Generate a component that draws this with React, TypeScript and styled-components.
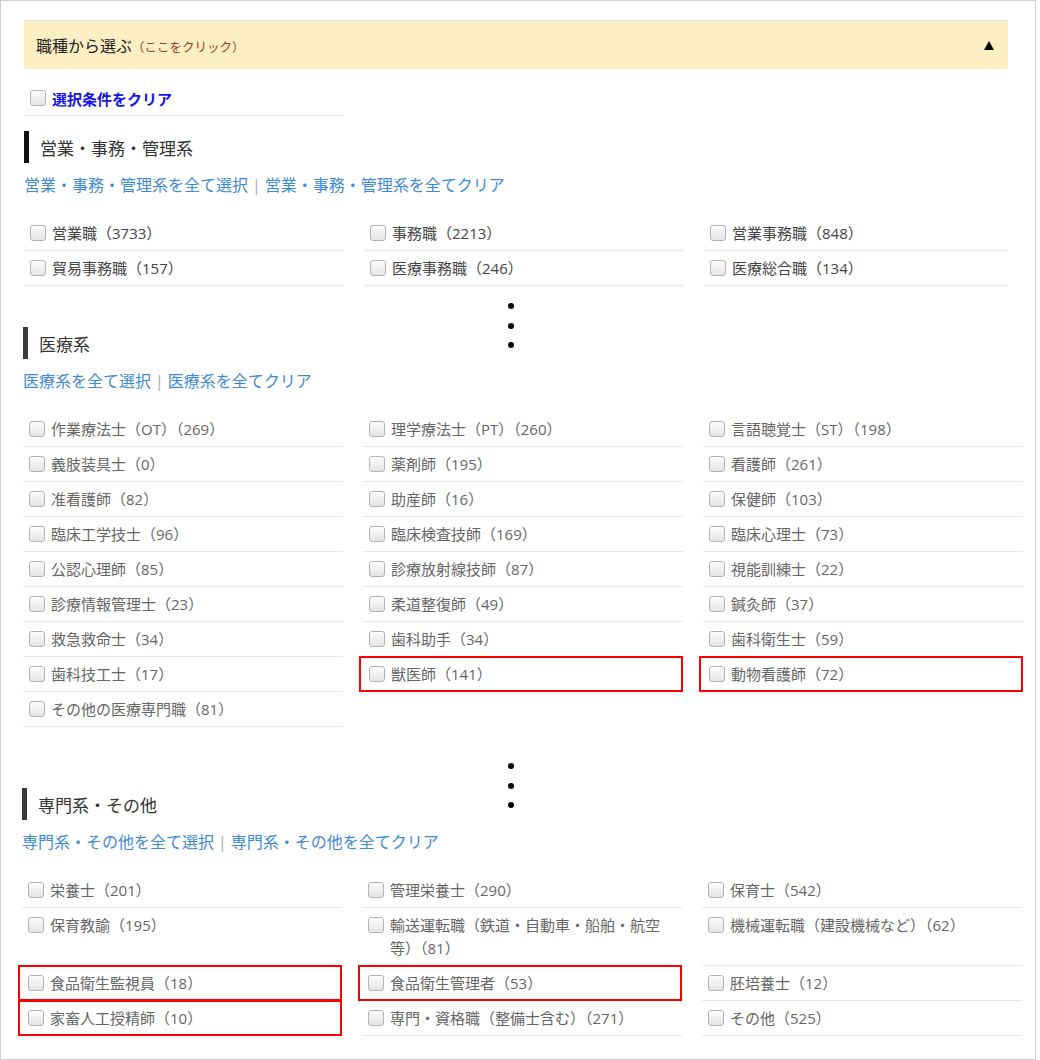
import React from "react";
import styled, { createGlobalStyle, css } from "styled-components";

const GlobalStyle = createGlobalStyle`
  html, body {
    margin: 0;
    padding: 0;
    background: #fff;
  }
  body {
    font-family: "Open Sans", "Noto Sans CJK JP", sans-serif;
  }
`;

type Job = { label: string; marked?: boolean };

type Group = {
  title: string;
  x: number;
  top: number;
  bar: string;
  text: string;
  cols: string;
  jobs: Job[];
};

const groups: Group[] = [
  {
    title: "営業・事務・管理系",
    x: 0,
    top: 15,
    bar: "#111",
    text: "#444",
    cols: "320px 320px 1fr",
    jobs: [
      { label: "営業職（3733）" },
      { label: "事務職（2213）" },
      { label: "営業事務職（848）" },
      { label: "貿易事務職（157）" },
      { label: "医療事務職（246）" },
      { label: "医療総合職（134）" },
    ],
  },
  {
    title: "医療系",
    x: -1,
    top: 41,
    bar: "#3a3a3a",
    text: "#666",
    cols: "320px 320px 320px",
    jobs: [
      { label: "作業療法士（OT）（269）" },
      { label: "理学療法士（PT）（260）" },
      { label: "言語聴覚士（ST）（198）" },
      { label: "義肢装具士（0）" },
      { label: "薬剤師（195）" },
      { label: "看護師（261）" },
      { label: "准看護師（82）" },
      { label: "助産師（16）" },
      { label: "保健師（103）" },
      { label: "臨床工学技士（96）" },
      { label: "臨床検査技師（169）" },
      { label: "臨床心理士（73）" },
      { label: "公認心理師（85）" },
      { label: "診療放射線技師（87）" },
      { label: "視能訓練士（22）" },
      { label: "診療情報管理士（23）" },
      { label: "柔道整復師（49）" },
      { label: "鍼灸師（37）" },
      { label: "救急救命士（34）" },
      { label: "歯科助手（34）" },
      { label: "歯科衛生士（59）" },
      { label: "歯科技工士（17）" },
      { label: "獣医師（141）", marked: true },
      { label: "動物看護師（72）", marked: true },
      { label: "その他の医療専門職（81）" },
    ],
  },
  {
    title: "専門系・その他",
    x: -2,
    top: 61,
    bar: "#3a3a3a",
    text: "#666",
    cols: "320px 320px 320px",
    jobs: [
      { label: "栄養士（201）" },
      { label: "管理栄養士（290）" },
      { label: "保育士（542）" },
      { label: "保育教諭（195）" },
      { label: "輸送運転職（鉄道・自動車・船舶・航空等）（81）" },
      { label: "機械運転職（建設機械など）（62）" },
      { label: "食品衛生監視員（18）", marked: true },
      { label: "食品衛生管理者（53）", marked: true },
      { label: "胚培養士（12）" },
      { label: "家畜人工授精師（10）", marked: true },
      { label: "専門・資格職（整備士含む）（271）" },
      { label: "その他（525）" },
    ],
  },
];

const Frame = styled.div`
  position: relative;
  box-sizing: border-box;
  width: 1036px;
  height: 1060px;
  border: 1px solid #cfcfcf;
  padding: 19px 0 0 23px;
  overflow: hidden;
`;

const Panel = styled.div`
  width: 984px;
`;

const Accordion = styled.div`
  display: flex;
  align-items: center;
  justify-content: space-between;
  height: 48px;
  border-top: 1px solid #d5dff0;
  background: #fdefc4;
  padding: 0 14px 0 12px;
`;

const AccordionTitle = styled.div`
  padding-top: 3px;
  font-size: 16px;
  line-height: 24px;
  color: #222;
`;

const Hint = styled.span`
  font-size: 12.5px;
  color: #9a3b1f;
`;

const Caret = styled.span`
  margin-top: 1px;
  width: 0;
  height: 0;
  border-left: 5px solid transparent;
  border-right: 5px solid transparent;
  border-bottom: 9px solid #000;
`;

const ClearRow = styled.label`
  display: flex;
  align-items: center;
  gap: 6px;
  box-sizing: border-box;
  width: 320px;
  height: 35px;
  margin-top: 12px;
  padding-left: 6px;
  border-bottom: 1px solid #e8e8e8;
`;

const ClearText = styled.span`
  font-size: 15px;
  font-weight: 700;
  color: #1414ee;
`;

const Check = styled.span`
  flex: none;
  box-sizing: border-box;
  width: 16px;
  height: 16px;
  border: 1px solid #b3b3b3;
  border-radius: 3px;
  background: linear-gradient(#fcfcfc, #e4e4e4);
  box-shadow: inset 0 1px 0 #fff;
`;

const Section = styled.section<{ $x: number; $top: number }>`
  margin-left: ${(p) => p.$x}px;
  margin-top: ${(p) => p.$top}px;
`;

const Heading = styled.h3<{ $bar: string }>`
  margin: 0;
  height: 32px;
  border-left: 5px solid ${(p) => p.$bar};
  padding-left: 11px;
  font-size: 17px;
  font-weight: 400;
  line-height: 36px;
  color: #333;
`;

const Links = styled.div`
  margin-top: 10px;
  font-size: 16px;
  line-height: 24px;
  color: #3d8ad8;
`;

const Sep = styled.span`
  margin: 0 4px;
  color: #aaa;
`;

const Grid = styled.div<{ $cols: string }>`
  display: grid;
  grid-template-columns: ${(p) => p.$cols};
  column-gap: 20px;
  margin-top: 19px;
`;

const Item = styled.label<{ $color: string; $marked?: boolean }>`
  position: relative;
  display: flex;
  align-items: flex-start;
  gap: 6px;
  padding: 5.5px 10px 5.5px 6px;
  border-bottom: 1px solid #e8e8e8;
  font-size: 15px;
  line-height: 23px;
  color: ${(p) => p.$color};

  ${Check} {
    margin-top: 3.5px;
  }

  ${(p) =>
    p.$marked &&
    css`
      &::after {
        content: "";
        position: absolute;
        top: -1px;
        bottom: -1px;
        left: -4px;
        right: 0;
        border: 2px solid #f00;
      }
    `}
`;

const Dots = styled.div<{ $top: number }>`
  position: absolute;
  left: 507px;
  top: ${(p) => p.$top}px;
  display: flex;
  flex-direction: column;
  gap: 13.5px;
`;

const Dot = styled.span`
  width: 6px;
  height: 6px;
  border-radius: 50%;
  background: #000;
`;

const GroupBlock = ({ group }: { group: Group }) => (
  <Section $x={group.x} $top={group.top}>
    <Heading $bar={group.bar}>{group.title}</Heading>
    <Links>
      {group.title}を全て選択
      <Sep>|</Sep>
      {group.title}を全てクリア
    </Links>
    <Grid $cols={group.cols}>
      {group.jobs.map((job) => (
        <Item key={job.label} $color={group.text} $marked={job.marked}>
          <Check />
          <span>{job.label}</span>
        </Item>
      ))}
    </Grid>
  </Section>
);

const Ellipsis = ({ top }: { top: number }) => (
  <Dots $top={top}>
    <Dot />
    <Dot />
    <Dot />
  </Dots>
);

export default function App() {
  const [first, ...rest] = groups;
  return (
    <>
      <GlobalStyle />
      <Frame>
        <Panel>
          <Accordion>
            <AccordionTitle>
              職種から選ぶ<Hint>（ここをクリック）</Hint>
            </AccordionTitle>
            <Caret />
          </Accordion>
          <ClearRow>
            <Check />
            <ClearText>選択条件をクリア</ClearText>
          </ClearRow>
          <GroupBlock group={first} />
        </Panel>
        {rest.map((g) => (
          <GroupBlock key={g.title} group={g} />
        ))}
        <Ellipsis top={302} />
        <Ellipsis top={762} />
      </Frame>
    </>
  );
}
